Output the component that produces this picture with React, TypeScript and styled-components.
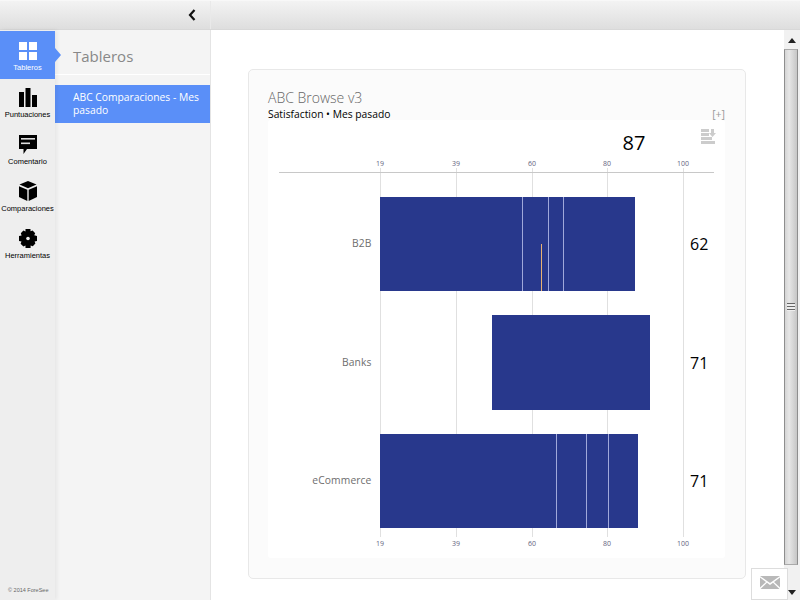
import * as React from 'react'
import styled, { createGlobalStyle } from 'styled-components'

const GlobalStyle = createGlobalStyle`
  html, body {
    margin: 0;
    height: 100%;
    overflow: hidden;
    background: #fff;
    font-family: "Open Sans", "Liberation Sans", sans-serif;
  }
`

const ticks = [
  { label: '19', x: 380 },
  { label: '39', x: 456 },
  { label: '60', x: 532 },
  { label: '80', x: 607 },
  { label: '100', x: 683 },
]

const bars = [
  { name: 'B2B', value: '62', x: 380, end: 635, y: 197, h: 94, marks: [522, 548, 563], low: 541 },
  { name: 'Banks', value: '71', x: 492, end: 650, y: 315, h: 95, marks: [], low: 0 },
  { name: 'eCommerce', value: '71', x: 380, end: 638, y: 434, h: 94, marks: [556, 586, 608], low: 0 },
]

const GridIcon = () => (
  <svg width="18" height="18" viewBox="0 0 18 18" fill="#fff">
    <rect width="8" height="8" />
    <rect x="10" width="8" height="8" />
    <rect y="10" width="8" height="8" />
    <rect x="10" y="10" width="8" height="8" />
  </svg>
)

const BarsIcon = () => (
  <svg width="18" height="19" viewBox="0 0 18 19" fill="#000">
    <rect y="4" width="5" height="15" />
    <rect x="6.5" width="5" height="19" />
    <rect x="13" y="7" width="5" height="12" />
  </svg>
)

const CommentIcon = () => (
  <svg width="18" height="19" viewBox="0 0 18 19">
    <path d="M0 0H18V14H8L4.5 19V14H0Z" fill="#000" />
    <rect x="2" y="3" width="14" height="1.6" fill="#ddd" />
    <rect x="2" y="7.5" width="9" height="1.6" fill="#ddd" />
  </svg>
)

const CubeIcon = () => (
  <svg width="18" height="20" viewBox="0 0 18 20" fill="#000">
    <path d="M9 0L17.5 3.6L9 7.2L.5 3.6Z" />
    <path d="M0 5.2L8.3 8.7V20L0 16Z" />
    <path d="M18 5.2L9.7 8.7V20L18 16Z" />
  </svg>
)

const GearIcon = () => (
  <svg width="18" height="19" viewBox="0 0 18 19">
    <path
      d="M6.5 0H11.5V2.3L13.6 1.6L16.2 4.2L15.2 6.3L18 7V12L15.6 12.6L16.4 14.6L13.8 17.2L11.6 16.4V19H6.5V16.6L4.4 17.4L1.6 14.8L2.5 12.6L0 12V7L2.6 6.4L1.8 4.2L4.4 1.6L6.5 2.5Z"
      fill="#000"
    />
    <circle cx="9" cy="9.5" r="1.8" fill="#eee" />
  </svg>
)

const navItems = [
  { label: 'Tableros', icon: <GridIcon />, active: true },
  { label: 'Puntuaciones', icon: <BarsIcon />, active: false },
  { label: 'Comentario', icon: <CommentIcon />, active: false },
  { label: 'Comparaciones', icon: <CubeIcon />, active: false },
  { label: 'Herramientas', icon: <GearIcon />, active: false },
]

const App = () => (
  <Page>
    <GlobalStyle />
    <TopBar>
      <TopLeft>
        <svg width="8" height="12" viewBox="0 0 8 12">
          <path d="M6.5 1L2 6L6.5 11" fill="none" stroke="#111" strokeWidth="2.2" />
        </svg>
      </TopLeft>
    </TopBar>
    <Body>
      <Rail>
        {navItems.map((item) => (
          <NavItem key={item.label} $active={item.active}>
            <NavIcon>{item.icon}</NavIcon>
            <NavLabel $active={item.active}>{item.label}</NavLabel>
          </NavItem>
        ))}
        <Copyright>© 2014 ForeSee</Copyright>
      </Rail>
      <SidePanel>
        <PanelTitle>Tableros</PanelTitle>
        <PanelItem>ABC Comparaciones - Mes pasado</PanelItem>
      </SidePanel>
      <Main>
        <Card>
          <CardTitle>ABC Browse v3</CardTitle>
          <SubRow>
            <Subtitle>Satisfaction • Mes pasado</Subtitle>
            <Expand>[+]</Expand>
          </SubRow>
          <ChartBox>
            <svg width="457" height="438" viewBox="268 120 457 438">
              {ticks.map((t) => (
                <React.Fragment key={t.label}>
                  <rect x={t.x} y="168" width="1" height="369" fill="#e0e0e0" />
                  <TickText x={t.x} y="165.5">{t.label}</TickText>
                  <TickText x={t.x} y="545.5">{t.label}</TickText>
                </React.Fragment>
              ))}
              <rect x="279" y="172" width="435" height="1" fill="#c8c8c8" />
              <TotalText x="634" y="150">87</TotalText>
              <g fill="#ccc">
                <rect x="701" y="129" width="8" height="3" />
                <rect x="701" y="133" width="8" height="3" />
                <rect x="701" y="137" width="11" height="3" />
                <rect x="701" y="141" width="14" height="3" />
                <path d="M711 129H714V133H716L712.5 137L709 133H711Z" />
              </g>
              {bars.map((b) => (
                <g key={b.name}>
                  <rect x={b.x} y={b.y} width={b.end - b.x} height={b.h} fill="#28388c" />
                  {b.marks.map((m) => (
                    <rect key={m} x={m} y={b.y} width="1" height={b.h} fill="#a0a8da" />
                  ))}
                  {b.low > 0 && <rect x={b.low} y={b.y + 47} width="1" height={b.h - 47} fill="#e9b272" />}
                  <RowLabel x="371.5" y={b.y + b.h / 2 + 3}>{b.name}</RowLabel>
                  <ValueText x="690" y={b.y + b.h / 2 + 6}>{b.value}</ValueText>
                </g>
              ))}
            </svg>
          </ChartBox>
        </Card>
      </Main>
      <Scrollbar>
        <ScrollArrow>
          <svg width="8" height="5" viewBox="0 0 8 5"><path d="M4 0L8 5H0Z" fill="#222" /></svg>
        </ScrollArrow>
        <ScrollThumb>
          <Grip />
        </ScrollThumb>
        <ScrollArrow $end>
          <svg width="8" height="5" viewBox="0 0 8 5"><path d="M0 0H8L4 5Z" fill="#222" /></svg>
        </ScrollArrow>
      </Scrollbar>
    </Body>
    <MailButton>
      <svg width="20" height="13" viewBox="0 0 20 13" fill="#b9b9b9">
        <path d="M0 0H20L10 7Z" />
        <path d="M0 1.5L6 6L0 11.5Z" />
        <path d="M20 1.5L14 6L20 11.5Z" />
        <path d="M7 6.8L10 9L13 6.8L19.5 13H.5Z" />
      </svg>
    </MailButton>
  </Page>
)

export default App

const Page = styled.div`
  display: flex;
  flex-direction: column;
  height: 100vh;
  overflow: hidden;
`

const TopBar = styled.header`
  display: flex;
  flex: 0 0 30px;
  height: 30px;
  box-sizing: border-box;
  border-top: 1px solid #f8f8f8;
  border-bottom: 1px solid #d8d8d8;
  background: linear-gradient(#f3f3f3, #dedede);
`

const TopLeft = styled.div`
  display: flex;
  align-items: center;
  justify-content: flex-end;
  box-sizing: border-box;
  width: 211px;
  padding-right: 14px;
  border-right: 1px solid #e9e9e9;
`

const Body = styled.div`
  display: flex;
  flex: 1;
  min-height: 0;
`

const Rail = styled.nav`
  position: relative;
  z-index: 2;
  display: flex;
  flex-direction: column;
  flex: 0 0 55px;
  padding-top: 1px;
  background: #eee;
  box-shadow: 2px 0 4px rgba(0, 0, 0, 0.06);
`

const NavItem = styled.div<{ $active: boolean }>`
  position: relative;
  display: flex;
  flex-direction: column;
  align-items: center;
  box-sizing: border-box;
  height: ${(p) => (p.$active ? '48px' : '47px')};
  padding-top: ${(p) => (p.$active ? '9px' : '8px')};
  background: ${(p) => (p.$active ? '#5a8ff8' : 'transparent')};

  ${(p) =>
    p.$active &&
    `
    &::after {
      content: '';
      position: absolute;
      left: 55px;
      top: 17px;
      border-left: 6px solid #5a8ff8;
      border-top: 7px solid transparent;
      border-bottom: 7px solid transparent;
    }
  `}
`

const NavIcon = styled.div`
  display: flex;
  align-items: flex-end;
  justify-content: center;
  height: 20px;
`

const NavLabel = styled.span<{ $active: boolean }>`
  margin-top: 3px;
  font-family: "Liberation Sans", Arial, sans-serif;
  font-size: 7.5px;
  line-height: 10px;
  white-space: nowrap;
  color: ${(p) => (p.$active ? '#fff' : '#000')};
`

const Copyright = styled.small`
  position: absolute;
  left: 8px;
  bottom: 6px;
  font-family: "Liberation Sans", Arial, sans-serif;
  font-size: 5.5px;
  line-height: 7px;
  white-space: nowrap;
  color: #666;
`

const SidePanel = styled.aside`
  flex: 0 0 156px;
  box-sizing: border-box;
  border-right: 1px solid #e4e4e4;
  background: #f4f4f4;
`

const PanelTitle = styled.h2`
  box-sizing: border-box;
  height: 45px;
  margin: 0 0 10px;
  padding: 15px 0 0 18px;
  border-bottom: 1px solid #fff;
  font-size: 15px;
  font-weight: 400;
  line-height: 22px;
  color: #888;
`

const PanelItem = styled.div`
  box-sizing: border-box;
  height: 38px;
  padding: 6px 6px 0 18px;
  background: #5a8ff8;
  font-size: 10.3px;
  line-height: 13px;
  color: #fff;
`

const Main = styled.main`
  flex: 1;
  min-width: 0;
  padding: 39px 38px 0 37px;
  background: #fff;
`

const Card = styled.section`
  box-sizing: border-box;
  width: 498px;
  height: 510px;
  padding: 18px 20px 20px 19px;
  border: 1px solid #e8e8e8;
  border-radius: 5px;
  background: #fbfbfb;
`

const CardTitle = styled.h3`
  margin: 0;
  font-size: 14px;
  font-weight: 300;
  line-height: 20px;
  color: #666;
`

const SubRow = styled.div`
  display: flex;
  align-items: center;
  justify-content: space-between;
  height: 12px;
`

const Subtitle = styled.span`
  font-size: 10.3px;
  line-height: 12px;
  color: #000;
`

const Expand = styled.span`
  font-size: 10.5px;
  line-height: 12px;
  color: #999;
`

const ChartBox = styled.div`
  display: flex;
  width: 457px;
  height: 438px;
  border-radius: 3px;
  background: #fff;
`

const TickText = styled.text`
  font-family: "Open Sans", sans-serif;
  font-size: 7px;
  text-anchor: middle;
  fill: #5f6480;
`

const RowLabel = styled.text`
  font-family: "Open Sans", sans-serif;
  font-size: 10.3px;
  letter-spacing: 0.1px;
  text-anchor: end;
  fill: #6e6e6e;
`

const ValueText = styled.text`
  font-family: "Open Sans", sans-serif;
  font-size: 16px;
  fill: #000;
`

const TotalText = styled.text`
  font-family: "Open Sans", sans-serif;
  font-size: 20px;
  text-anchor: middle;
  fill: #000;
`

const Scrollbar = styled.div`
  display: flex;
  flex-direction: column;
  flex: 0 0 16px;
  background: #f1f1f1;
`

const ScrollArrow = styled.div<{ $end?: boolean }>`
  display: flex;
  flex: 0 0 19px;
  align-items: center;
  justify-content: center;
  box-sizing: border-box;
  margin-top: ${(p) => (p.$end ? 'auto' : '0')};
  padding: ${(p) => (p.$end ? '4px 0 0' : '1px 0 0')};
`

const ScrollThumb = styled.div`
  display: flex;
  flex: 0 0 516px;
  align-items: center;
  justify-content: center;
  box-sizing: border-box;
  width: 14px;
  border: 1px solid #8e8e8e;
  border-top-color: #aaa;
  border-bottom-color: #aaa;
  background: linear-gradient(90deg, #d4d4d4, #e6e6e6 35%, #c6c6c6);
`

const Grip = styled.div`
  width: 8px;
  height: 8px;
  background: repeating-linear-gradient(#666 0 1px, #eee 1px 3px);
`

const MailButton = styled.button`
  position: fixed;
  left: 751px;
  top: 568px;
  display: flex;
  align-items: center;
  justify-content: center;
  box-sizing: border-box;
  width: 37px;
  height: 32px;
  padding: 0 0 3px;
  border: 1px solid #ddd;
  background: #fff;
`
